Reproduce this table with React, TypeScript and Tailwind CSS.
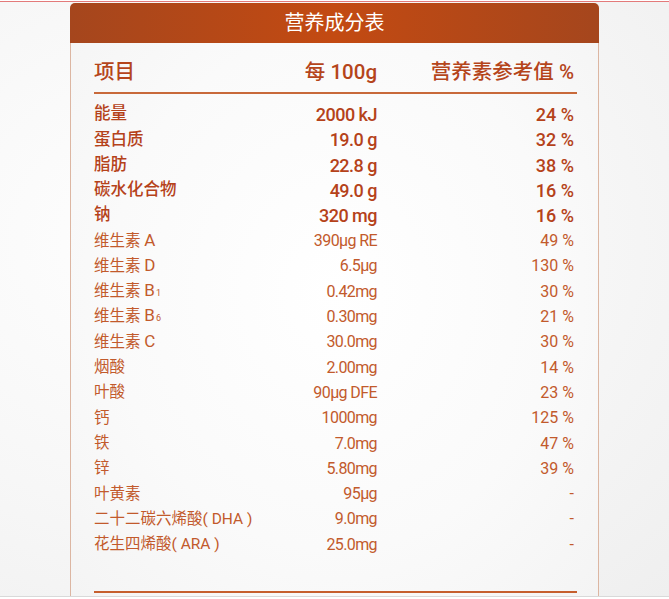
import React from "react";

type Row = { label: React.ReactNode; value: string; pct: string };

const boldRows: Row[] = [
  { label: "能量", value: "2000 kJ", pct: "24 %" },
  { label: "蛋白质", value: "19.0 g", pct: "32 %" },
  { label: "脂肪", value: "22.8 g", pct: "38 %" },
  { label: "碳水化合物", value: "49.0 g", pct: "16 %" },
  { label: "钠", value: "320 mg", pct: "16 %" },
];

const sub = (s: string) => <span className="text-[9px] ml-[1px]">{s}</span>;
const L = (s: string) => <span className="text-[17px]">{s}</span>;

const regRows: Row[] = [
  { label: <>维生素 {L("A")}</>, value: "390µg RE", pct: "49 %" },
  { label: <>维生素 {L("D")}</>, value: "6.5µg", pct: "130 %" },
  { label: <>维生素 {L("B")}{sub("1")}</>, value: "0.42mg", pct: "30 %" },
  { label: <>维生素 {L("B")}{sub("6")}</>, value: "0.30mg", pct: "21 %" },
  { label: <>维生素 {L("C")}</>, value: "30.0mg", pct: "30 %" },
  { label: "烟酸", value: "2.00mg", pct: "14 %" },
  { label: "叶酸", value: "90µg DFE", pct: "23 %" },
  { label: "钙", value: "1000mg", pct: "125 %" },
  { label: "铁", value: "7.0mg", pct: "47 %" },
  { label: "锌", value: "5.80mg", pct: "39 %" },
  { label: "叶黄素", value: "95µg", pct: "-" },
  { label: "二十二碳六烯酸( DHA )", value: "9.0mg", pct: "-" },
  { label: "花生四烯酸( ARA )", value: "25.0mg", pct: "-" },
];

export default function App() {
  return (
    <div className="w-[669px] h-[599px] overflow-hidden flex flex-col bg-[#f6f6f6] font-['Roboto','Noto_Sans_CJK_SC',sans-serif]">
      <div className="h-[1px] bg-white" />
      <div className="h-[1px] bg-[#e37a7a]" />
      <div className="flex-1 flex bg-[radial-gradient(ellipse_at_30%_40%,#ffffff_0%,#f7f7f7_55%,#efefef_100%)]">
        <div className="ml-[70px] mt-[1px] w-[529px] flex flex-col">
          <div className="h-[40px] rounded-t-[5px] bg-[linear-gradient(90deg,#a5461d_0%,#c34a12_50%,#a5461d_100%)] flex items-center justify-center text-white text-[20px] leading-none pb-[1px]">
            营养成分表
          </div>
          <div className="flex-1 border-x border-[#dcb6a2] bg-[radial-gradient(ellipse_at_50%_45%,#ffffff_0%,#fafafa_60%,#f4f4f4_100%)] pl-[23px] pr-[21px] flex flex-col">
            <div className="flex items-center pt-[17px] pb-[8px] border-b-2 border-[#c8693a] text-[#b5451b] font-medium text-[20.5px] leading-[24px]">
              <div className="flex-1 min-w-0">项目</div>
              <div className="w-[120px] text-right">每 100g</div>
              <div className="w-[200px] text-right pr-[3px] whitespace-nowrap">营养素参考值 %</div>
            </div>
            <div className="pt-[8px] flex flex-col">
              {boldRows.map((r, i) => (
                <div key={i} className="h-[25.3px] flex items-center text-[#b5421a] font-medium">
                  <div className="flex-1 min-w-0 text-[16.5px] whitespace-nowrap">{r.label}</div>
                  <div className="w-[120px] text-right text-[18px] tracking-[-0.5px]">{r.value}</div>
                  <div className="w-[200px] text-right pr-[3px] text-[18px]">{r.pct}</div>
                </div>
              ))}
              {regRows.map((r, i) => (
                <div key={i} className="h-[25.3px] flex items-center text-[#c25a2c]">
                  <div className="flex-1 min-w-0 text-[15.5px] leading-[25px] whitespace-nowrap">{r.label}</div>
                  <div className="w-[120px] text-right text-[16px] tracking-[-0.6px]">{r.value}</div>
                  <div className="w-[200px] text-right pr-[3px] text-[16px]">{r.pct}</div>
                </div>
              ))}
            </div>
            <div className="flex-1" />
            <div className="h-[2px] bg-[#c65f2e] mb-[3px]" />
          </div>
        </div>
      </div>
      <div className="h-[1px] bg-[#d9d9d9]" />
      <div className="h-[2px] bg-white" />
    </div>
  );
}
